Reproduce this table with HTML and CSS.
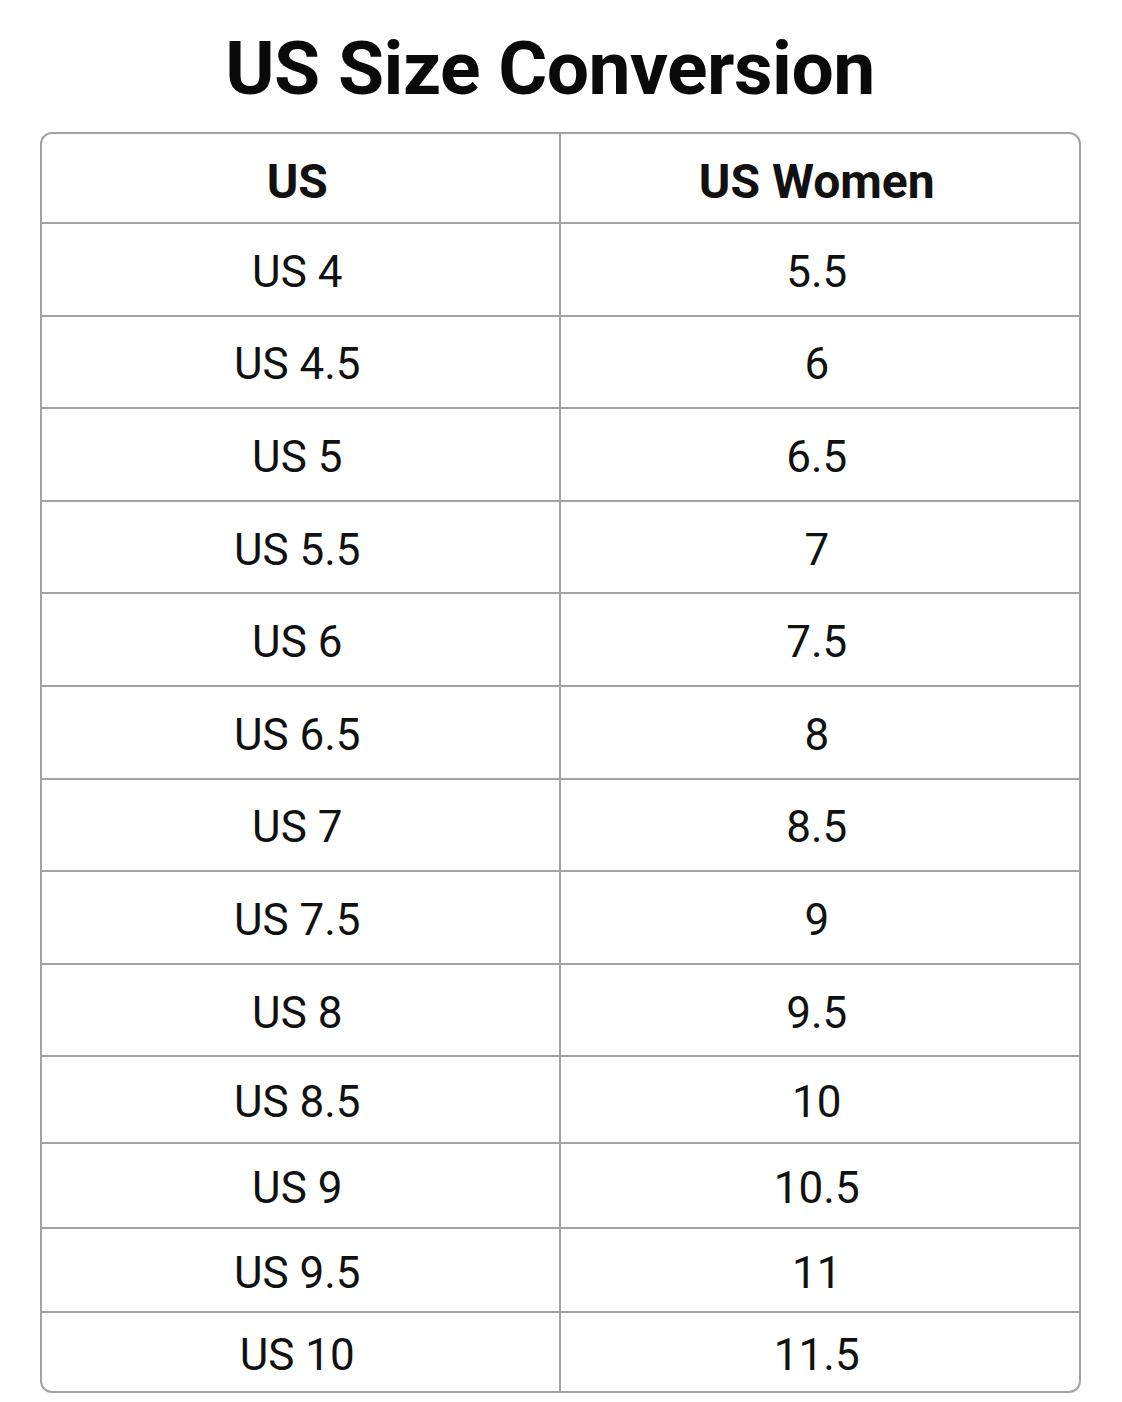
FILE: index.html
```html
<!DOCTYPE html>
<html>
<head>
<meta charset="utf-8">
<link rel="stylesheet" href="styles.css">
</head>
<body>
<main class="page">
  <h1 class="title">US Size Conversion</h1>
  <div class="chart">
    <div class="cell head">US</div><div class="cell head">US Women</div>
    <div class="cell">US 4</div><div class="cell">5.5</div>
    <div class="cell">US 4.5</div><div class="cell">6</div>
    <div class="cell">US 5</div><div class="cell">6.5</div>
    <div class="cell">US 5.5</div><div class="cell">7</div>
    <div class="cell">US 6</div><div class="cell">7.5</div>
    <div class="cell">US 6.5</div><div class="cell">8</div>
    <div class="cell">US 7</div><div class="cell">8.5</div>
    <div class="cell">US 7.5</div><div class="cell">9</div>
    <div class="cell">US 8</div><div class="cell">9.5</div>
    <div class="cell">US 8.5</div><div class="cell">10</div>
    <div class="cell">US 9</div><div class="cell">10.5</div>
    <div class="cell">US 9.5</div><div class="cell">11</div>
    <div class="cell last">US 10</div><div class="cell last">11.5</div>
  </div>
</main>
</body>
</html>
```
FILE: styles.css
```css
html, body {
  margin: 0;
  padding: 0;
  background: #ffffff;
}
body {
  font-family: Roboto, "Liberation Sans", sans-serif;
  color: #111111;
}
.page {
  width: 1122px;
  height: 1402px;
  box-sizing: border-box;
  padding: 24px 40px 0 40px;
  display: flex;
  flex-direction: column;
  align-items: stretch;
}
.title {
  margin: 0;
  text-align: center;
  font-size: 75px;
  font-weight: 700;
  line-height: 88px;
  height: 108px;
  padding-right: 22px;
  letter-spacing: -0.5px;
  color: #0a0a0a;
}
.chart {
  width: 1041px;
  height: 1261px;
  box-sizing: border-box;
  border: 2px solid #a3a3a3;
  border-radius: 12px;
  display: grid;
  grid-template-columns: 1fr 1fr;
  grid-template-rows: 90px repeat(9, 92.6px) 87px 85px 84px 1fr;
  overflow: hidden;
}
.cell {
  display: flex;
  align-items: center;
  justify-content: center;
  font-size: 44px;
  font-weight: 400;
  border-bottom: 2px solid #a3a3a3;
  box-sizing: border-box;
  padding: 5px 6px 0 0;
}
.cell:nth-child(odd) {
  border-right: 2px solid #a3a3a3;
}
.cell.last {
  border-bottom: none;
}
.head {
  font-weight: 700;
  font-size: 48px;
  padding-top: 6px;
}
```
